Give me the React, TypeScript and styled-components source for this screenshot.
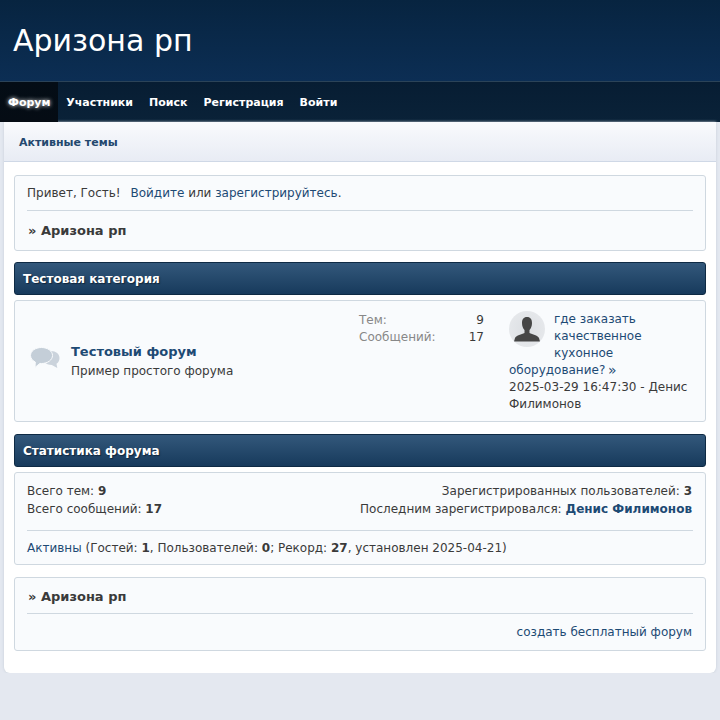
import React from 'react';
import styled, { createGlobalStyle } from 'styled-components';

const Global = createGlobalStyle`
  html, body {
    margin: 0;
    padding: 0;
    background: #e4e8f0;
    font-family: "DejaVu Sans", sans-serif;
    font-size: 12px;
    color: #3a3a3a;
  }
  a {
    color: #1d4a74;
    text-decoration: none;
  }
`;

const Header = styled.header`
  height: 82px;
  box-sizing: border-box;
  padding: 21px 13px 0;
  background: linear-gradient(#072440, #0c2e54);
  border-bottom: 1px solid #2b4358;
`;

const Logo = styled.h1`
  margin: 0;
  font-size: 30px;
  line-height: 40px;
  font-weight: 400;
  color: #fff;
`;

const Nav = styled.nav`
  display: flex;
  height: 40px;
  background: linear-gradient(#071d33, #0a2238);
`;

const NavItem = styled.a<{ $active?: boolean }>`
  display: block;
  height: 40px;
  padding: 0 ${(p) => (p.$active ? '7.7px' : '8px')} 0 8px;
  line-height: 42px;
  font-size: 11px;
  font-weight: 700;
  color: #fff;
  background: ${(p) => (p.$active ? 'linear-gradient(#040d16, #050c14)' : 'transparent')};
  text-shadow: ${(p) => (p.$active ? '0 0 4px #fff' : 'none')};
`;

const Wrap = styled.main`
  margin: 0 4px;
  padding-bottom: 22px;
  background: #fff;
  border-radius: 0 0 6px 6px;
  box-shadow: 0 0 3px #c5cdd8;
`;

const ActiveBar = styled.div`
  height: 40px;
  box-sizing: border-box;
  padding-left: 15px;
  line-height: 41px;
  font-size: 11px;
  font-weight: 700;
  color: #23486e;
  background: linear-gradient(#f9fafd, #e8ecf4);
  border-bottom: 1px solid #cfd8e6;
`;

const Content = styled.div`
  padding: 13px 10px 0;
`;

const Panel = styled.section<{ $gap?: number }>`
  box-sizing: border-box;
  margin-bottom: ${(p) => p.$gap ?? 12}px;
  padding: 0 12px;
  background: #f9fbfd;
  border: 1px solid #cfd8e0;
  border-radius: 3px;
  line-height: 17px;
`;

const Welcome = styled.div`
  padding: 9px 0 8px;
  border-bottom: 1px solid #cfd8e0;
  a { margin-left: 6px; }
  a + a { margin-left: 0; }
`;

const Crumb = styled.div`
  padding: 11px 1px 11px;
  font-size: 13px;
  line-height: 17px;
  font-weight: 700;
`;

const CrumbLine = styled(Crumb)`
  border-bottom: 1px solid #cfd8e0;
  padding: 10px 1px 8px;
`;

const CategoryBar = styled.h2`
  margin: 0 0 5px;
  height: 33px;
  box-sizing: border-box;
  padding-left: 8px;
  font-size: 12px;
  line-height: 33px;
  font-weight: 700;
  color: #fff;
  text-shadow: 1px 1px 1px #10263c;
  background: linear-gradient(#33587b, #173a5c);
  border: 1px solid #0e2a44;
  border-radius: 3px;
`;

const ForumRow = styled(Panel)`
  display: flex;
  height: 122px;
  padding: 0;
`;

const ForumIcon = styled.svg`
  flex: none;
  width: 30px;
  height: 24px;
  margin: 46px 11px 0 15px;
`;

const ForumInfo = styled.div`
  width: 288px;
  padding-top: 41px;
`;

const ForumTitle = styled.a`
  display: block;
  margin-bottom: 1px;
  font-size: 13px;
  font-weight: 700;
  line-height: 20px;
`;

const Stats = styled.div`
  display: grid;
  grid-template-columns: 1fr auto;
  justify-items: end;
  width: 125px;
  height: 34px;
  margin-top: 11px;
`;

const StatLabel = styled.span`
  justify-self: start;
  color: #888;
`;

const LastPost = styled.div`
  width: 186px;
  margin-left: 25px;
  padding-top: 10px;
  line-height: 17px;
`;

const Avatar = styled.div`
  float: left;
  width: 36px;
  height: 36px;
  margin-right: 9px;
  border-radius: 50%;
  overflow: hidden;
  background: radial-gradient(#dcdfe3, #e9ebee);
  svg { display: block; }
`;

const Arrow = styled.span`
  margin-left: -1px;
  font-size: 14px;
  line-height: 17px;
  vertical-align: top;
`;

const StatsBody = styled.div`
  display: flex;
  justify-content: space-between;
  padding: 10px 0 12px;
  border-bottom: 1px solid #cfd8e0;
  line-height: 17.6px;
`;

const RightBlock = styled.div`
  text-align: right;
  padding-right: 1px;
`;

const Online = styled.div`
  padding: 9px 0 7px;
`;

const Credit = styled.div`
  padding: 10px 1px 9px 0;
  text-align: right;
`;

const App = () => (
  <>
    <Global />
    <Header>
      <Logo>Аризона рп</Logo>
    </Header>
    <Nav>
      <NavItem $active>Форум</NavItem>
      <NavItem>Участники</NavItem>
      <NavItem>Поиск</NavItem>
      <NavItem>Регистрация</NavItem>
      <NavItem>Войти</NavItem>
    </Nav>
    <Wrap>
      <ActiveBar>Активные темы</ActiveBar>
      <Content>
        <Panel $gap={11}>
          <Welcome>
            Привет, Гость! <a href="#">Войдите</a> или <a href="#">зарегистрируйтесь</a>.
          </Welcome>
          <Crumb>» Аризона рп</Crumb>
        </Panel>

        <CategoryBar>Тестовая категория</CategoryBar>
        <ForumRow>
          <ForumIcon viewBox="0 0 30 24">
            <path
              d="M21 4c5 0 8.500 3 8.500 7 0 2.500-1 4.500-3 5.700l.8 4.300-5.500-3.100c-3 0-6-1-7.500-3z"
              fill="#cbd3dc"
            />
            <path
              d="M11.500.5c6.200 0 11 3.600 11 8s-4.800 8-11 8l-1.500-.1-5 4 .3-5.400C2.300 13.500.5 11 .5 8.500.5 4.100 5.300.5 11.500.5z"
              fill="#c4ced8"
              stroke="#f9fbfd"
            />
          </ForumIcon>
          <ForumInfo>
            <ForumTitle href="#">Тестовый форум</ForumTitle>
            Пример простого форума
          </ForumInfo>
          <Stats>
            <StatLabel>Тем:</StatLabel>
            <span>9</span>
            <StatLabel>Сообщений:</StatLabel>
            <span>17</span>
          </Stats>
          <LastPost>
            <Avatar>
              <svg width="36" height="36" viewBox="0 0 36 36">
                <path
                  d="M18 6c3.500 0 5 2.500 5 6 0 3-1 5.500-2.500 7v3c3 1.500 8 2 9.500 5l1 3.500H5l1-3.500c1.500-3 6.500-3.500 9.500-5v-3C14 17.500 13 15 13 12c0-3.500 1.500-6 5-6z"
                  fill="#464646"
                />
              </svg>
            </Avatar>
            <a href="#">
              где заказать качественное кухонное оборудование? <Arrow>»</Arrow>
            </a>
            <br />
            2025-03-29 16:47:30 - Денис Филимонов
          </LastPost>
        </ForumRow>

        <CategoryBar>Статистика форума</CategoryBar>
        <Panel>
          <StatsBody>
            <div>
              Всего тем: <b>9</b>
              <br />
              Всего сообщений: <b>17</b>
            </div>
            <RightBlock>
              Зарегистрированных пользователей: <b>3</b>
              <br />
              Последним зарегистрировался: <a href="#"><b>Денис Филимонов</b></a>
            </RightBlock>
          </StatsBody>
          <Online>
            <a href="#">Активны</a> (Гостей: <b>1</b>, Пользователей: <b>0</b>; Рекорд: <b>27</b>, установлен 2025-04-21)
          </Online>
        </Panel>

        <Panel $gap={0}>
          <CrumbLine>» Аризона рп</CrumbLine>
          <Credit>
            <a href="#">создать бесплатный форум</a>
          </Credit>
        </Panel>
      </Content>
    </Wrap>
  </>
);

export default App;
